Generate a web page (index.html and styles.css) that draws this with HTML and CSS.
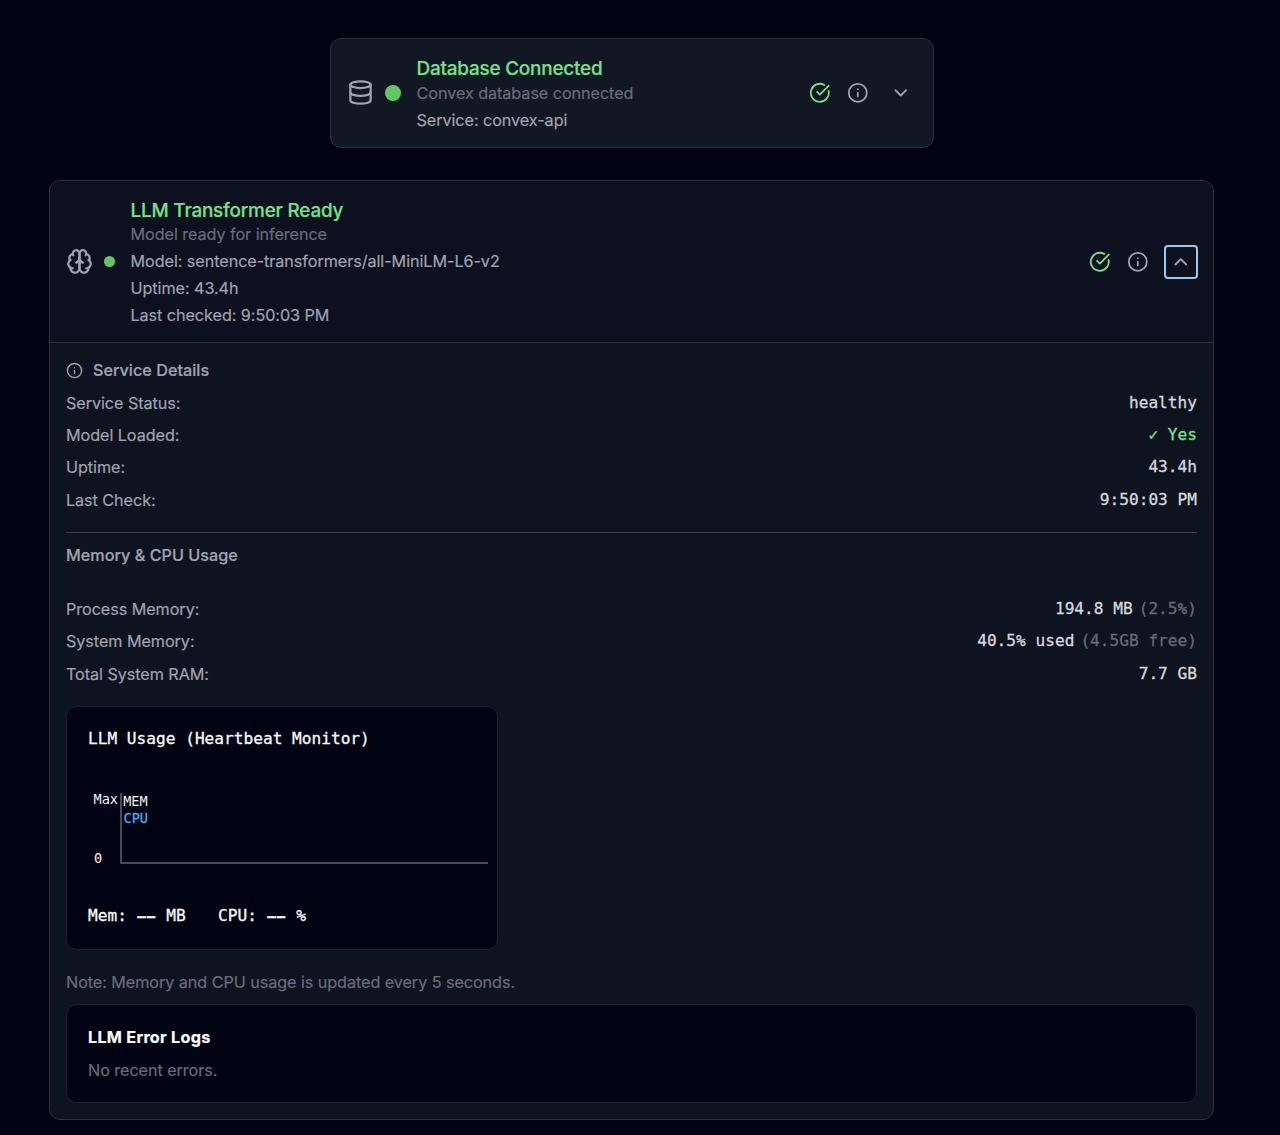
FILE: index.html
```html
<!DOCTYPE html>
<html lang="en">
<head>
<meta charset="utf-8">
<title>Service Status</title>
<link rel="stylesheet" href="styles.css">
</head>
<body>
<svg class="defs" aria-hidden="true">
  <symbol id="check" viewBox="0 0 24 24"><path d="M21.8 10A10 10 0 1 1 17 3.335"/><path d="m9 11 3 3L22 4"/></symbol>
  <symbol id="info" viewBox="0 0 24 24"><circle cx="12" cy="12" r="10"/><path d="M12 16v-4M12 8h.01"/></symbol>
</svg>
<main class="page">
  <section class="card card-db">
    <header class="card-head">
      <svg class="icon icon-lg" viewBox="0 0 24 24"><ellipse cx="12" cy="5" rx="9" ry="3"/><path d="M3 5v14a9 3 0 0 0 18 0V5"/><path d="M3 12a9 3 0 0 0 18 0"/></svg>
      <span class="dot dot-lg"></span>
      <div class="summary">
        <h2 class="title">Database Connected</h2>
        <p class="desc">Convex database connected</p>
        <p class="meta">Service: convex-api</p>
      </div>
      <div class="actions">
        <svg class="icon ok"><use href="#check"/></svg>
        <svg class="icon"><use href="#info"/></svg>
        <button class="toggle" aria-label="Expand"><svg class="icon" viewBox="0 0 24 24"><path d="m6 9 6 6 6-6"/></svg></button>
      </div>
    </header>
  </section>

  <section class="card card-llm">
    <header class="card-head">
      <svg class="icon icon-lg" viewBox="0 0 24 24"><path d="M12 5a3 3 0 1 0-5.997.125 4 4 0 0 0-2.526 5.77 4 4 0 0 0 .556 6.588A4 4 0 1 0 12 18Z"/><path d="M12 5a3 3 0 1 1 5.997.125 4 4 0 0 1 2.526 5.77 4 4 0 0 1-.556 6.588A4 4 0 1 1 12 18Z"/><path d="M15 13a4.500 4.500 0 0 1-3-4 4.500 4.500 0 0 1-3 4"/><path d="M17.599 6.500a3 3 0 0 0 .399-1.375M6.003 5.125A3 3 0 0 0 6.401 6.500M3.477 10.896a4 4 0 0 1 .585-.396M19.938 10.500a4 4 0 0 1 .585.396M6 18a4 4 0 0 1-1.967-.516M19.967 17.484A4 4 0 0 1 18 18"/></svg>
      <span class="dot"></span>
      <div class="summary">
        <h2 class="title">LLM Transformer Ready</h2>
        <p class="desc">Model ready for inference</p>
        <p class="meta">Model: sentence-transformers/all-MiniLM-L6-v2</p>
        <p class="meta">Uptime: 43.4h</p>
        <p class="meta">Last checked: 9:50:03 PM</p>
      </div>
      <div class="actions">
        <svg class="icon ok"><use href="#check"/></svg>
        <svg class="icon"><use href="#info"/></svg>
        <button class="toggle focused" aria-label="Collapse"><svg class="icon" viewBox="0 0 24 24"><path d="m18 15-6-6-6 6"/></svg></button>
      </div>
    </header>
    <div class="details">
      <h3 class="heading"><svg class="icon icon-sm"><use href="#info"/></svg>Service Details</h3>
      <div class="row"><span>Service Status:</span><span class="value">healthy</span></div>
      <div class="row"><span>Model Loaded:</span><span class="value ok">✓ Yes</span></div>
      <div class="row"><span>Uptime:</span><span class="value">43.4h</span></div>
      <div class="row"><span>Last Check:</span><span class="value">9:50:03 PM</span></div>
      <h3 class="heading usage">Memory &amp; CPU Usage</h3>
      <div class="row"><span>Process Memory:</span><span class="value">194.8 MB<span class="hint">(2.5%)</span></span></div>
      <div class="row"><span>System Memory:</span><span class="value">40.5% used<span class="hint">(4.5GB free)</span></span></div>
      <div class="row"><span>Total System RAM:</span><span class="value">7.7 GB</span></div>
      <div class="monitor">
        <div class="monitor-title">LLM Usage (Heartbeat Monitor)</div>
        <svg class="chart" viewBox="0 0 401 108">
          <path class="axis" d="M33 30V100H400"/>
          <text x="5.500" y="40.500">Max</text>
          <text x="5.900" y="100.300">0</text>
          <text x="35.200" y="42.700">MEM</text>
          <text class="cpu" x="35.500" y="59.700">CPU</text>
        </svg>
        <div class="readings"><span>Mem: <b>––</b> MB</span><span>CPU: <b>––</b> %</span></div>
      </div>
      <p class="note">Note: Memory and CPU usage is updated every 5 seconds.</p>
      <div class="logs">
        <h3 class="logs-title">LLM Error Logs</h3>
        <p class="logs-empty">No recent errors.</p>
      </div>
    </div>
  </section>
</main>
</body>
</html>
```
FILE: styles.css
```css
* { box-sizing: border-box; }
body {
  margin: 0;
  background: #020213;
  color: #a0a3af;
  font: 16.2px/21.6px Inter, "Noto Sans", sans-serif;
  letter-spacing: -0.065px;
  -webkit-text-stroke: 0.2px currentColor;
}
h2, h3, p { margin: 0; }
.defs { display: none; }
.page {
  display: flex;
  flex-direction: column;
  align-items: center;
  gap: 32px;
  width: 1263px;
  height: 1135px;
  padding-top: 38px;
}
.card { border: 1px solid #2b303d; border-radius: 11px; overflow: hidden; }
.card-db { width: 604px; height: 110px; background: #111723; }
.card-llm { width: 1165px; height: 940px; background: #0e1320; }
.card-head { display: flex; align-items: center; padding: 15px 15px 16px 16px; }
.card-llm .card-head { height: 162px; padding: 16px 15px 16px 15.5px; background: #0d101f; border-bottom: 1px solid #2b303d; }
.icon {
  display: block;
  flex: none;
  width: 21.6px;
  height: 21.6px;
  fill: none;
  stroke: currentColor;
  stroke-width: 2;
  stroke-linecap: round;
  stroke-linejoin: round;
}
.icon-lg { width: 27px; height: 27px; }
.icon-sm { width: 17px; height: 17px; margin: -1px 0 0 -0.5px; }
.ok, .value.ok { color: #78e08b; }
.dot { width: 11px; height: 11px; margin-left: 11.5px; border-radius: 50%; background: #60c769; }
.dot-lg { width: 16px; height: 16px; margin-left: 11px; }
.summary { padding-top: 1px; margin-left: 15.5px; white-space: nowrap; }
.card-db .summary { margin-left: 16px; }
.title { color: #78e08b; font-size: 18.9px; font-weight: 500; line-height: 27px; letter-spacing: -0.2px; }
.card-db .title { margin-bottom: 0.4px; line-height: 27.4px; }
.card-llm .title { padding-top: 0.4px; }
.desc { color: #6a6d7a; }
.meta { margin-top: 5.4px; }
.actions { display: flex; align-items: center; gap: 16.2px; margin-left: auto; }
.toggle {
  display: grid;
  place-items: center;
  width: 34px;
  height: 34px;
  margin-left: -1px;
  padding: 0;
  border: 0;
  border-radius: 4px;
  background: none;
  color: inherit;
}
.toggle.focused { border: 2px solid #9bc5f8; box-shadow: 0 0 0 1px #101114, inset 0 0 0 1px #101114; }
.details { display: flex; flex-direction: column; gap: 10.8px; padding: 17.2px 16px 16px; }
.heading { display: flex; align-items: center; gap: 10.5px; font-size: 16.2px; font-weight: 500; line-height: 21.6px; letter-spacing: 0.02px; }
.usage { margin: 10px 0 21.6px; padding-top: 11.8px; border-top: 1px solid #3a404b; }
.row { display: flex; justify-content: space-between; }
.value, .monitor { font-family: "DejaVu Sans Mono", monospace; font-size: 16.15px; letter-spacing: 0; }
.value { margin: -0.9px 0 0.9px; color: #d6d8dc; -webkit-text-stroke-width: 0.3px; }
.hint { margin-left: 6px; color: #666a76; }
.monitor {
  width: 432px;
  height: 244px;
  margin-top: 9.8px;
  padding: 21.2px 8px 20px 21px;
  border: 1px solid #192030;
  border-radius: 11px;
  background: #010212;
  color: #f8fafc;
  -webkit-text-stroke-width: 0.3px;
}
.chart { display: block; width: 401px; height: 108px; margin-top: 13.6px; }
.chart text { fill: #f1f3f7; font-size: 13.6px; }
.chart .cpu { fill: #4aa9e0; stroke: #4aa9e0; stroke-width: 0.3px; }
.axis { fill: none; stroke: #424c5e; stroke-width: 2; stroke-linejoin: round; }
.readings { display: flex; gap: 32.4px; margin-top: 34.2px; }
.readings b { margin-left: 0.6px; font-size: 14px; font-weight: 700; letter-spacing: 1.2px; }
.note { margin-top: 11.4px; color: #696c79; }
.logs { height: 99px; margin-top: -0.6px; padding: 21px; border: 1px solid #1b2231; border-radius: 11px; background: #010212; }
.logs-title { color: #fff; font-size: 16.2px; font-weight: 700; line-height: 22px; letter-spacing: 0.27px; }
.logs-empty { margin-top: 11.8px; color: #626e80; }
```
